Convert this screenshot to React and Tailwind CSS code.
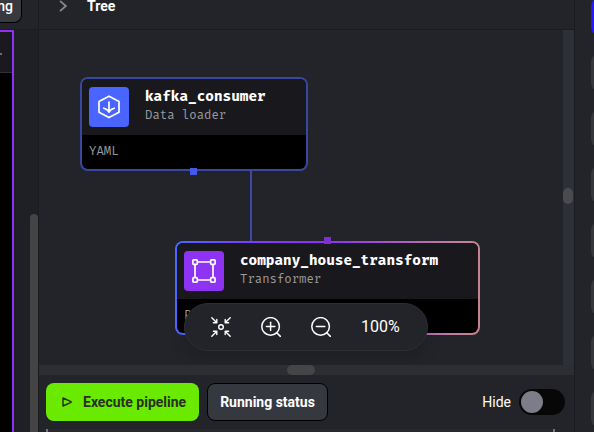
import React from 'react';

function LoaderIcon() {
  return (
    <svg className="size-6" viewBox="0 0 24 24" fill="none" stroke="white" strokeWidth="1.7" strokeLinecap="round" strokeLinejoin="round" aria-hidden="true">
      <path d="M12 1.2 22 6.5V17.3L12 22.6 2 17.3V6.5Z" />
      <path d="M12 7V17M6.8 13.2C9 13.8 11.2 15 12 17.2C12.8 15 15 13.8 17.2 13.2" />
    </svg>
  );
}

function TransformerIcon() {
  return (
    <svg className="size-6" viewBox="0 0 24 24" fill="none" stroke="white" strokeWidth="1.7" aria-hidden="true">
      <path d="M5 3H19M5 21H19M3 5V19M21 5V19" />
      <rect x="0.9" y="0.9" width="4.4" height="4.4" rx="0.8" fill="#8f33f2" />
      <rect x="18.7" y="0.9" width="4.4" height="4.4" rx="0.8" fill="#8f33f2" />
      <rect x="0.9" y="18.7" width="4.4" height="4.4" rx="0.8" fill="#8f33f2" />
      <rect x="18.7" y="18.7" width="4.4" height="4.4" rx="0.8" fill="#8f33f2" />
    </svg>
  );
}

function FitIcon() {
  return (
    <svg className="size-5" viewBox="0 0 20 20" fill="none" stroke="white" strokeWidth="1.4" strokeLinecap="round" strokeLinejoin="round" aria-hidden="true">
      <circle cx="10" cy="10" r="2.3" />
      <path d="M0.8 0.8 5.6 5.6M2.4 5.8H5.8V2.4" />
      <path d="M19.2 0.8 14.4 5.6M17.6 5.8H14.2V2.4" />
      <path d="M0.8 19.2 5.6 14.4M2.4 14.2H5.8V17.6" />
      <path d="M19.2 19.2 14.4 14.4M17.6 14.2H14.2V17.6" />
    </svg>
  );
}

function ZoomIcon({ plus }) {
  return (
    <svg className="size-5" viewBox="0 0 20 20" fill="none" stroke="white" strokeWidth="1.5" strokeLinecap="round" aria-hidden="true">
      <circle cx="9.6" cy="9.4" r="8.8" />
      <path d="M16 16 19.4 19.4M5.4 9.4H13.8" />
      {plus && <path d="M9.6 5.2V13.6" />}
    </svg>
  );
}

function NodeBody({ icon, iconClass, name, kind, language }) {
  return (
    <div className="overflow-hidden rounded-md bg-black font-['Fira_Code','DejaVu_Sans_Mono',monospace]">
      <div className="flex h-14 gap-4 bg-[#19181d] px-[7px] pt-2">
        <div className={`flex size-10 shrink-0 items-center justify-center rounded-sm ${iconClass}`}>{icon}</div>
        <div className="whitespace-nowrap">
          <div className="text-[14px] leading-5 font-bold text-white">{name}</div>
          <div className="text-[12px] leading-[18px] text-[#9b9b9d]">{kind}</div>
        </div>
      </div>
      <div className="px-[7px] py-2 text-[12px] leading-[18px] text-[#9b9b9d]">{language}</div>
    </div>
  );
}

export default function App() {
  return (
    <div className="flex h-screen overflow-hidden bg-[#232429] font-[Roboto,sans-serif] text-white">
      <aside className="flex w-[38px] shrink-0 flex-col bg-[#1f2026]">
        <div className="flex h-[30px] shrink-0 items-start border-b border-[#1b1c1f] bg-[#232429]">
          <button type="button" className="flex h-[23px] w-[22px] items-start justify-end rounded-br-lg border-r border-b border-black bg-[#37393f] pr-2 text-[14px] leading-3 font-medium">
            ng
          </button>
        </div>
        <div className="flex min-h-0 grow justify-between">
          <div className="w-[14px] border-t-2 border-r-2 border-[#8f30f5] bg-black">
            <div className="flex h-[41px] items-center border-b border-[#32333a] bg-[#1a191f] pt-1">
              <span className="h-[2px] w-[2px] bg-[#6c6d76]" />
            </div>
          </div>
          <div className="mt-[184px] w-2 rounded-t-full bg-[#444444]" />
        </div>
      </aside>

      <main className="flex min-w-0 grow flex-col border-x border-[#1b1c1f]">
        <header className="flex h-[30px] shrink-0 items-start border-b border-[#1b1c1f] pl-5">
          <svg className="h-3 w-2" viewBox="0 0 8 12" fill="none" stroke="#85868c" strokeWidth="1.8" aria-hidden="true">
            <path d="M1 0.8 6.8 6 1 11.2" />
          </svg>
          <h1 className="ml-5 text-[14px] leading-3 font-bold">Tree</h1>
        </header>

        <div className="flex min-h-0 grow">
          <section className="relative min-w-0 grow overflow-hidden" aria-label="Pipeline">
            <svg className="absolute top-[141px] left-[211px] h-[70px] w-[2px]" aria-hidden="true">
              <rect width="2" height="70" fill="#3b4aa8" />
            </svg>
            <div className="absolute top-[47px] left-[41px] w-[228px] rounded-lg bg-[#38479f] p-[2px]">
              <NodeBody icon={<LoaderIcon />} iconClass="bg-[#4a65ff]" name="kafka_consumer" kind="Data loader" language="YAML" />
              <span className="absolute -bottom-1 left-[110px] size-[7px] bg-[#4459e6]" />
            </div>
            <div className="absolute top-[211px] left-[136px] w-[305px] rounded-lg bg-[linear-gradient(to_right,#4b68ff_0%,#7d3cff_25%,#8f30f5_50%,#c27f9c_92%,#c58390_100%)] p-[2px]">
              <NodeBody icon={<TransformerIcon />} iconClass="bg-[#8f33f2]" name="company_house_transform" kind="Transformer" language="PYTHON" />
              <span className="absolute -top-1 left-[149px] size-[7px] bg-[#7d2fd0]" />
            </div>
            <div className="absolute top-[273px] left-[145px] flex h-12 w-[244px] items-center gap-[30px] rounded-full border border-[#2d2e34] bg-[#232429] px-[26px] shadow-[0_8px_16px_rgba(0,0,0,0.15)]">
              <button type="button" aria-label="Fit"><FitIcon /></button>
              <button type="button" aria-label="Zoom in"><ZoomIcon plus /></button>
              <button type="button" aria-label="Zoom out"><ZoomIcon /></button>
              <span className="text-[16px] leading-5">100%</span>
            </div>
          </section>
          <div className="w-[11px] shrink-0 bg-[#2e3038] pt-[158px]">
            <div className="h-4 w-[10px] rounded-full bg-[#4b4b4e]" />
          </div>
        </div>
        <div className="h-[10px] shrink-0 bg-[#2d2e34] pl-[248px]">
          <div className="h-full w-7 rounded-full bg-[#454547]" />
        </div>

        <div className="flex h-[54px] shrink-0 items-center gap-2 pr-[9px] pl-[7px]">
          <button type="button" className="flex h-[38px] w-[153px] items-center gap-[11px] rounded-lg bg-[#69ea00] pl-4 text-[14px] font-bold whitespace-nowrap text-[#28311f]">
            <svg className="h-3 w-[10px]" viewBox="0 0 10 12" fill="none" stroke="#28311f" strokeWidth="1.5" aria-hidden="true">
              <path d="M1 2V10L9 6.4V5.6Z" strokeLinejoin="round" />
            </svg>
            Execute pipeline
          </button>
          <button type="button" className="h-[38px] w-[121px] rounded-lg border border-black bg-[#36383f] text-[14px] font-bold whitespace-nowrap">
            Running status
          </button>
          <label className="ml-auto flex items-center gap-2 text-[14px]">
            Hide
            <input type="checkbox" role="switch" className="h-[26px] w-[46px] appearance-none rounded-full bg-[#070707] p-[2px] before:block before:size-[22px] before:rounded-full before:bg-[#7d7d89] checked:before:translate-x-5" />
          </label>
        </div>
        <div className="mr-[19px] ml-[7px] h-[3px] shrink-0 border-x-2 border-[#74747d] bg-[#28282c]" />
      </main>

      <nav className="flex w-[19px] shrink-0 flex-col gap-[19px] overflow-hidden pl-4" aria-label="Tools">
        <button type="button" aria-label="Tree" className="-mt-[2px] h-[37px] w-10 shrink-0 rounded-lg bg-[#2a16ff]" />
        {['Files', 'Variables', 'Add-ons', 'Data', 'Charts', 'Secrets', 'Terminal'].map((label) => (
          <button key={label} type="button" aria-label={label} className="h-[37px] w-10 shrink-0 rounded-lg bg-[#36373b]" />
        ))}
      </nav>
    </div>
  );
}
